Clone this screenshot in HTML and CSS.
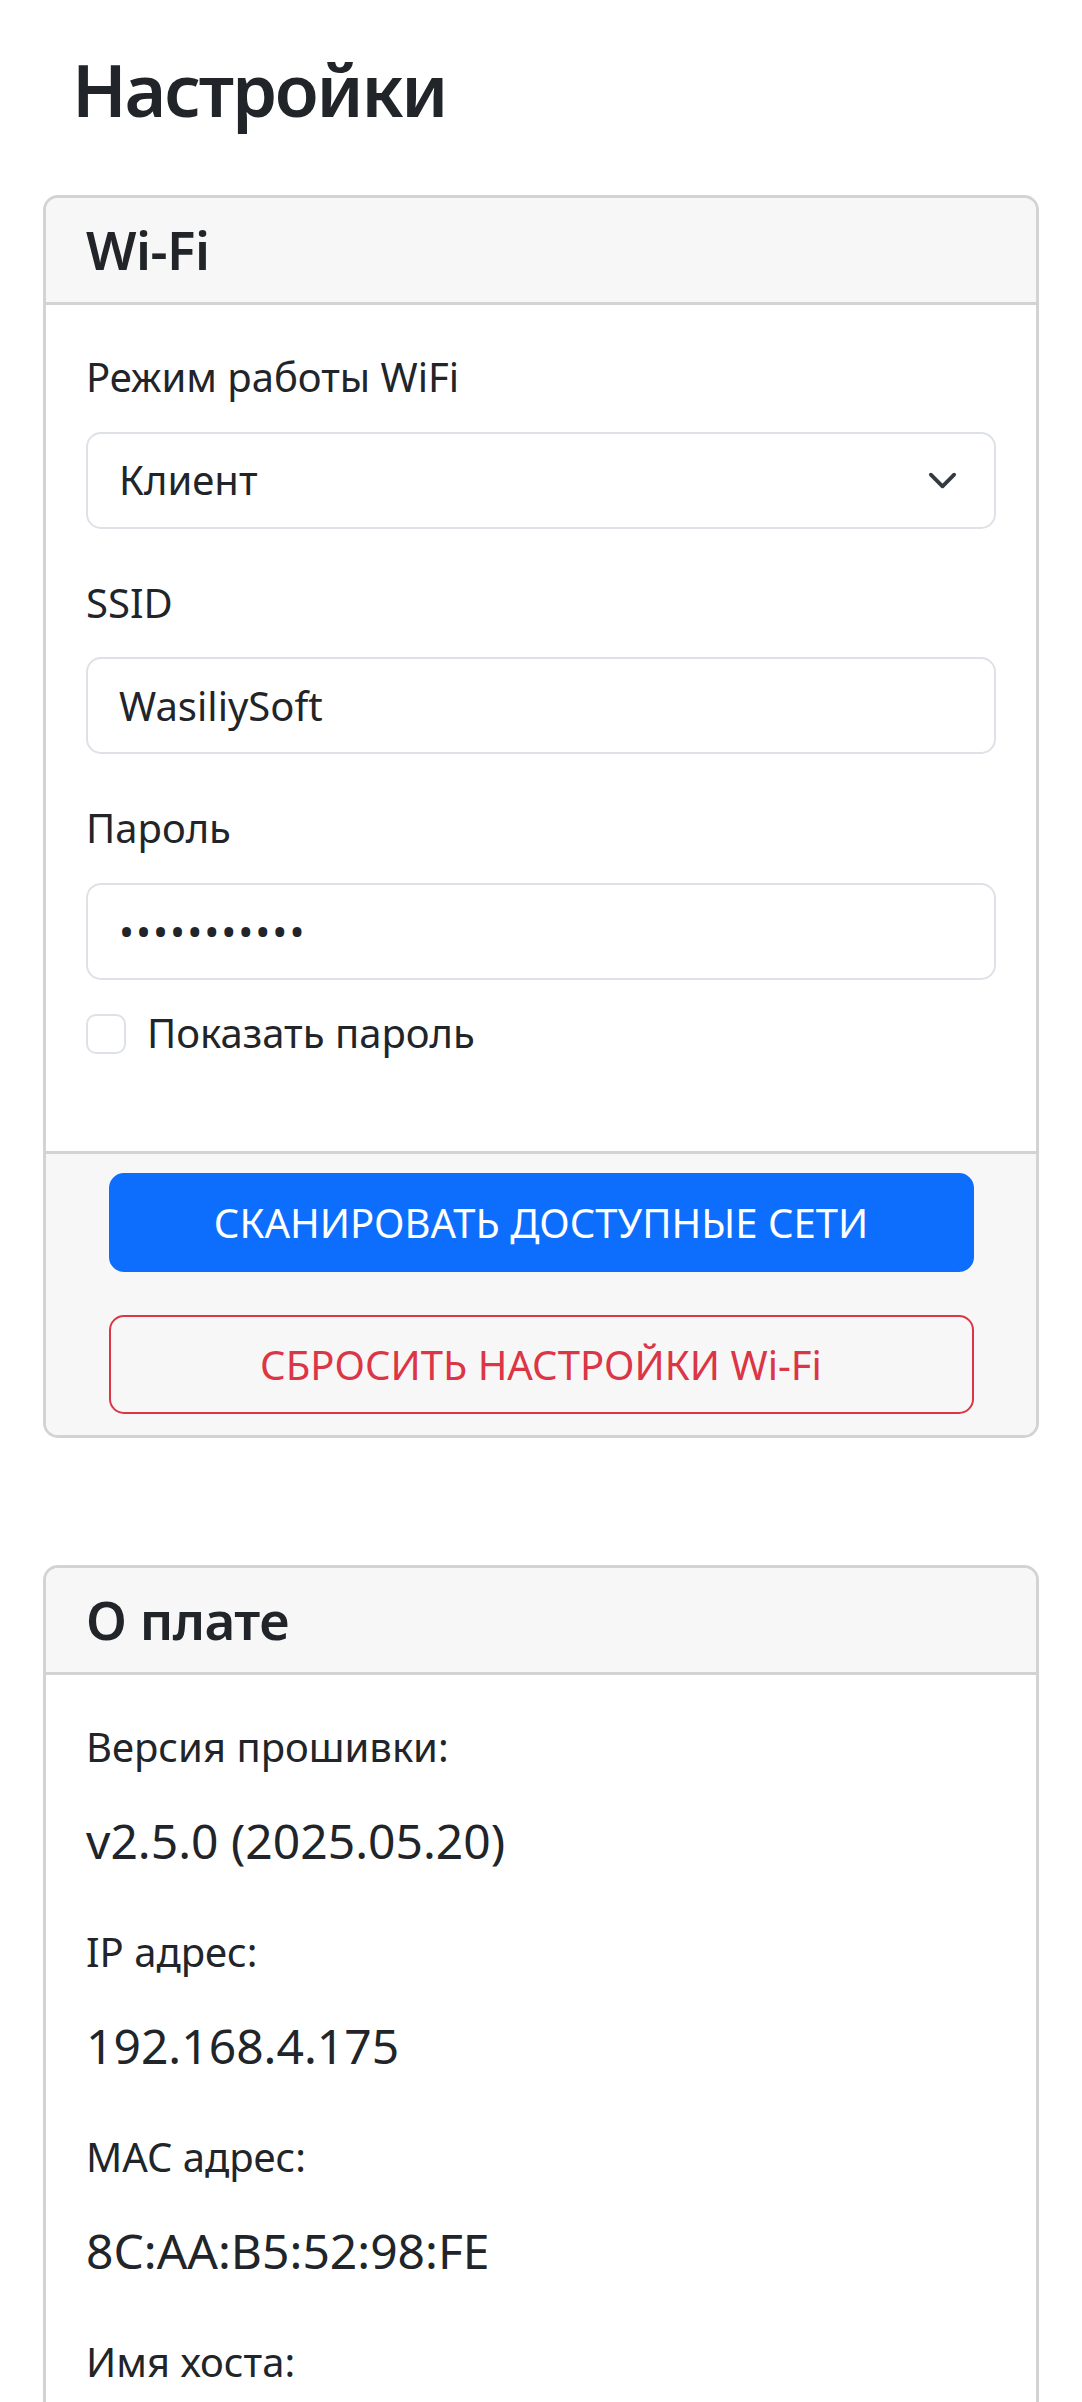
FILE: index.html
```html
<!DOCTYPE html>
<html lang="ru">
<head>
<meta charset="utf-8">
<title>Настройки</title>
<link rel="stylesheet" href="styles.css">
</head>
<body>
<main class="page">
  <h1 class="page-title">Настройки</h1>

  <section class="card">
    <div class="card-header"><h5 class="card-title">Wi-Fi</h5></div>
    <div class="card-body">
      <div class="field">
        <label class="field-label" for="mode">Режим работы WiFi</label>
        <div class="select-wrap">
          <select class="control" id="mode">
            <option selected>Клиент</option>
            <option>Точка доступа</option>
          </select>
          <svg class="chevron" viewBox="0 0 16 16" aria-hidden="true"><path d="M2 5l6 6 6-6" fill="none" stroke="#343a40" stroke-width="2" stroke-linecap="round" stroke-linejoin="round"/></svg>
        </div>
      </div>
      <div class="field">
        <label class="field-label" for="ssid">SSID</label>
        <input class="control" id="ssid" type="text" value="WasiliySoft">
      </div>
      <div class="field field-tight">
        <label class="field-label" for="pass">Пароль</label>
        <input class="control control-pass" id="pass" type="password" value="12345678901">
      </div>
      <label class="check"><input type="checkbox"><span>Показать пароль</span></label>
    </div>
    <div class="card-footer">
      <button class="btn btn-primary" type="button">СКАНИРОВАТЬ ДОСТУПНЫЕ СЕТИ</button>
      <button class="btn btn-outline-danger" type="button">СБРОСИТЬ НАСТРОЙКИ Wi-Fi</button>
    </div>
  </section>

  <section class="card">
    <div class="card-header"><h5 class="card-title">О плате</h5></div>
    <div class="card-body">
      <p class="info-label">Версия прошивки:</p>
      <p class="info-value">v2.5.0 (2025.05.20)</p>
      <p class="info-label">IP адрес:</p>
      <p class="info-value">192.168.4.175</p>
      <p class="info-label">MAC адрес:</p>
      <p class="info-value">8C:AA:B5:52:98:FE</p>
      <p class="info-label">Имя хоста:</p>
      <p class="info-value">wasiliysoft</p>
    </div>
  </section>
</main>
</body>
</html>
```
FILE: styles.css
```css
* { box-sizing: border-box; }

html, body {
  margin: 0;
  padding: 0;
}

body {
  font-family: "Noto Sans", "Open Sans", sans-serif;
  font-size: 40px;
  line-height: 60px;
  color: #212529;
  background: #fff;
}

.page {
  padding: 45px 43px 80px;
}

.page-title {
  margin: 0 0 61px 29px;
  font-size: 72px;
  line-height: 89px;
  font-weight: 600;
  letter-spacing: -2.2px;
}

.card {
  border: 3px solid #d3d3d3;
  border-radius: 15px;
  background: #fff;
  overflow: hidden;
}

.card + .card {
  margin-top: 127px;
}

.card-header {
  background: #f7f7f7;
  border-bottom: 3px solid #d3d3d3;
  padding: 20px 40px;
}

.card-title {
  margin: 0;
  font-size: 53px;
  line-height: 64px;
  font-weight: 600;
  letter-spacing: -0.5px;
}

.card-body {
  padding: 42px 40px 40px;
}

.field {
  margin-bottom: 44px;
}

.field-tight {
  margin-bottom: 23.5px;
}

.field-label {
  display: block;
  margin-bottom: 24.5px;
}

.control {
  display: block;
  width: 100%;
  height: 97px;
  margin: 0;
  padding: 0 31px;
  border: 2px solid #dee2e6;
  border-radius: 15px;
  background: #fff;
  color: #212529;
  font: inherit;
  outline: none;
}

.control-pass {
  letter-spacing: 2px;
}

.select-wrap {
  position: relative;
}

.select-wrap select {
  appearance: none;
  -webkit-appearance: none;
}

.chevron {
  position: absolute;
  right: 38px;
  top: 0;
  bottom: 0;
  margin: auto 0;
  width: 31px;
  height: 31px;
  pointer-events: none;
}

.check {
  display: flex;
  align-items: flex-start;
  gap: 21px;
  margin: 0 0 48px;
}

.check input {
  appearance: none;
  -webkit-appearance: none;
  flex: none;
  width: 40px;
  height: 40px;
  margin: 10.5px 0 0;
  border: 2px solid #dee2e6;
  border-radius: 10px;
  background: #fff;
}

.card-footer {
  display: flex;
  flex-direction: column;
  align-items: center;
  gap: 43px;
  padding: 19px 40px 21px;
  background: #f7f7f7;
  border-top: 3px solid #d3d3d3;
}

.btn {
  display: block;
  width: 865px;
  height: 99px;
  margin: 0;
  padding: 0 20px;
  border: 2px solid transparent;
  border-radius: 15px;
  font: inherit;
  text-align: center;
  cursor: pointer;
}

.btn-primary {
  background: #0d6efd;
  border-color: #0d6efd;
  color: #fff;
}

.btn-outline-danger {
  background: transparent;
  border-color: #dc3545;
  color: #dc3545;
}

.info-label {
  margin: 0 0 27.5px;
}

.info-value {
  margin: 0 0 45.5px;
  font-size: 48px;
  line-height: 72px;
}
```
